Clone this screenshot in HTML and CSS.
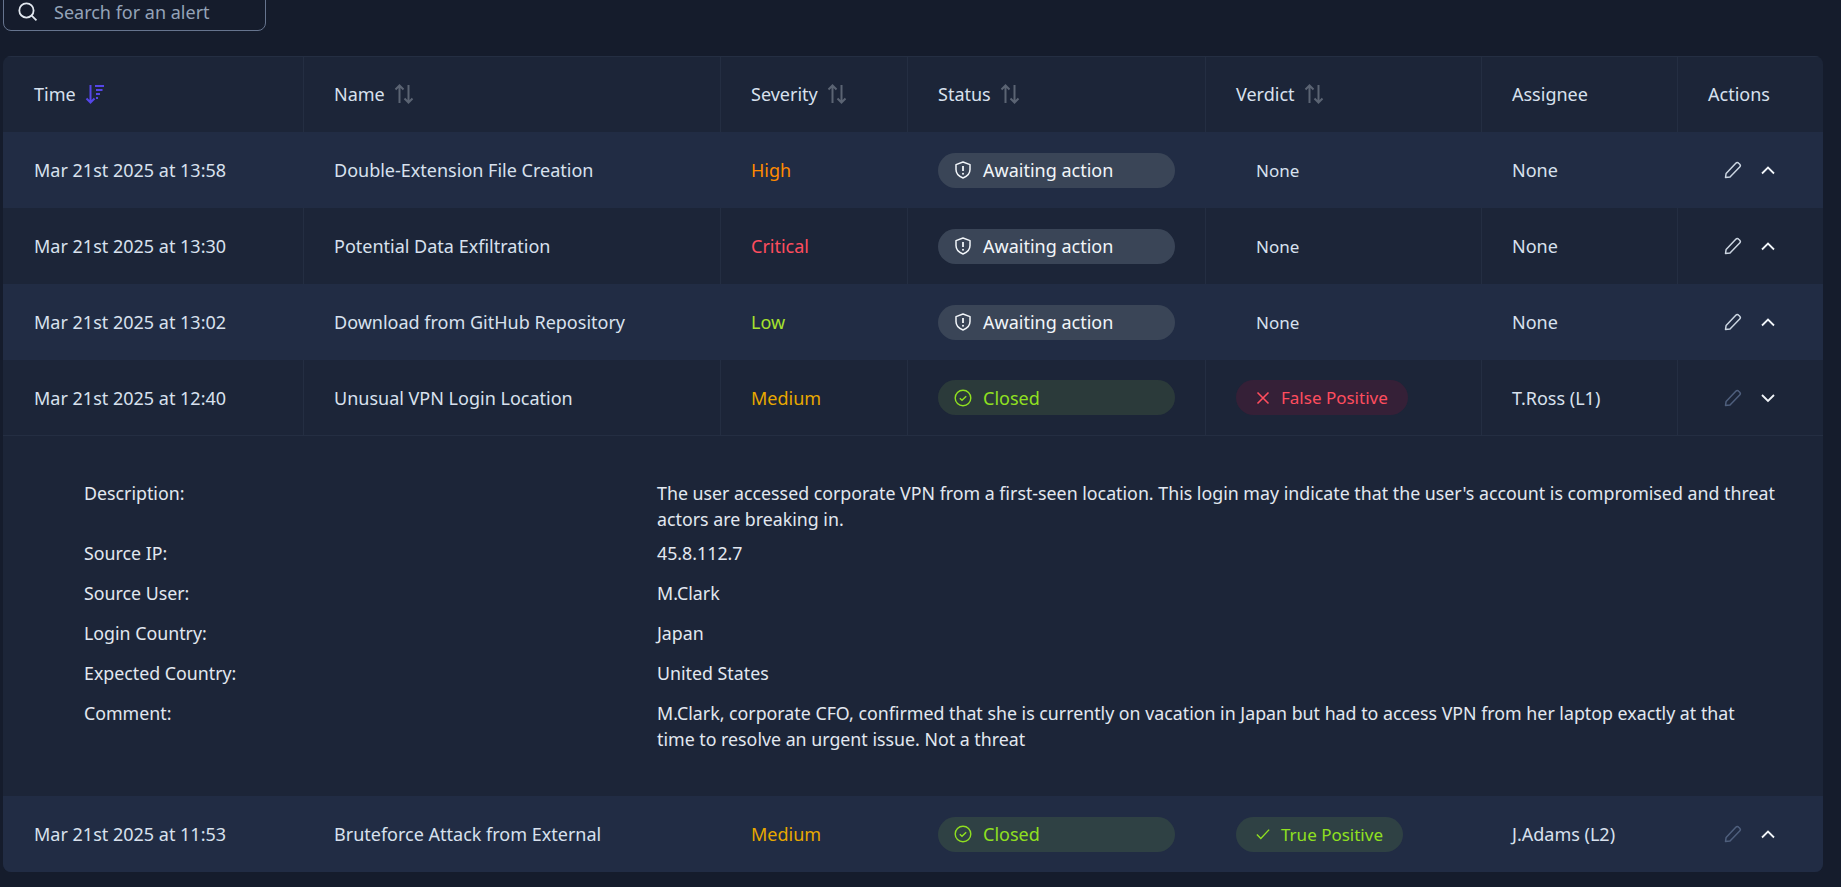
FILE: index.html
```html
<!DOCTYPE html>
<html lang="en">
<head>
  <meta charset="UTF-8" />
  <title>Alerts</title>
  <link rel="stylesheet" href="styles.css">
</head>
<body>
  <svg class="icon-defs" width="0" height="0">
    <defs>
      <symbol id="i-sort" viewBox="0 0 20 20"><path d="M5.5 19V1.5M1.5 5.5l4-4 4 4M14.5 1v17.5M10.5 14.5l4 4 4-4" fill="none" stroke="currentColor" stroke-width="2"/></symbol>
      <symbol id="i-pencil" viewBox="0 0 18 18"><path d="M1.5 16.5l.6-4L11.8 2.2a2 2 0 0 1 2.9 0l1 1a2 2 0 0 1 0 2.8L6 15.9z" fill="none" stroke="currentColor" stroke-width="1.5" stroke-linejoin="round"/></symbol>
      <symbol id="i-up" viewBox="0 0 16 16"><path d="M2 11.5l6-6 6 6" fill="none" stroke="currentColor" stroke-width="1.8"/></symbol>
      <symbol id="i-down" viewBox="0 0 16 16"><path d="M2 5l6 6 6-6" fill="none" stroke="currentColor" stroke-width="1.8"/></symbol>
      <symbol id="i-shield" viewBox="0 0 18 18"><path d="M9 1l7 2.6v5c0 4-2.8 6.900-7 8.400-4.200-1.500-7-4.400-7-8.400v-5z" fill="none" stroke="currentColor" stroke-width="1.500" stroke-linejoin="round"/><path d="M9 5v5" stroke="currentColor" stroke-width="1.800"/><circle cx="9" cy="12.700" r="1" fill="currentColor"/></symbol>
      <symbol id="i-closed" viewBox="0 0 18 18"><circle cx="9" cy="9" r="7.800" fill="none" stroke="currentColor" stroke-width="1.400"/><path d="M5.800 9.300l2.200 2 4.200-4" fill="none" stroke="currentColor" stroke-width="1.500"/></symbol>
    </defs>
  </svg>

  <div class="search">
    <svg class="search-icon" viewBox="0 0 20 20"><circle cx="9" cy="9" r="6.800" fill="none" stroke="currentColor" stroke-width="1.700"/><path d="M14 14l4.500 4.500" stroke="currentColor" stroke-width="1.700"/></svg>
    <span>Search for an alert</span>
  </div>

  <div class="panel">
    <table class="alerts">
      <colgroup>
        <col class="col-time"><col class="col-name"><col class="col-severity"><col class="col-status"><col class="col-verdict"><col class="col-assignee"><col class="col-actions">
      </colgroup>
      <thead>
        <tr>
          <th><span class="th-inner">Time <svg class="sort" viewBox="0 0 20 20"><path class="sort-active" d="M5.500 1v17.500M1.500 14.500l4 4 4-4" fill="none" stroke="currentColor" stroke-width="2"/><path class="sort-active" d="M10 2h9M11 6h6.500M11 10h4M11 14h2" fill="none" stroke="currentColor" stroke-width="2"/></svg></span></th>
          <th><span class="th-inner">Name <svg class="sort sort-idle"><use href="#i-sort"/></svg></span></th>
          <th><span class="th-inner">Severity <svg class="sort sort-idle"><use href="#i-sort"/></svg></span></th>
          <th><span class="th-inner">Status <svg class="sort sort-idle"><use href="#i-sort"/></svg></span></th>
          <th><span class="th-inner">Verdict <svg class="sort sort-idle"><use href="#i-sort"/></svg></span></th>
          <th>Assignee</th>
          <th>Actions</th>
        </tr>
      </thead>
      <tbody>
        <tr class="alt">
          <td>Mar 21st 2025 at 13:58</td>
          <td>Double-Extension File Creation</td>
          <td class="sev-high">High</td>
          <td><span class="pill pill-wait"><svg class="pill-icon"><use href="#i-shield"/></svg>Awaiting action</span></td>
          <td><span class="verdict">None</span></td>
          <td>None</td>
          <td><div class="actions"><svg class="edit"><use href="#i-pencil"/></svg><svg class="chev"><use href="#i-up"/></svg></div></td>
        </tr>
        <tr>
          <td>Mar 21st 2025 at 13:30</td>
          <td>Potential Data Exfiltration</td>
          <td class="sev-critical">Critical</td>
          <td><span class="pill pill-wait"><svg class="pill-icon"><use href="#i-shield"/></svg>Awaiting action</span></td>
          <td><span class="verdict">None</span></td>
          <td>None</td>
          <td><div class="actions"><svg class="edit"><use href="#i-pencil"/></svg><svg class="chev"><use href="#i-up"/></svg></div></td>
        </tr>
        <tr class="alt">
          <td>Mar 21st 2025 at 13:02</td>
          <td>Download from GitHub Repository</td>
          <td class="sev-low">Low</td>
          <td><span class="pill pill-wait"><svg class="pill-icon"><use href="#i-shield"/></svg>Awaiting action</span></td>
          <td><span class="verdict">None</span></td>
          <td>None</td>
          <td><div class="actions"><svg class="edit"><use href="#i-pencil"/></svg><svg class="chev"><use href="#i-up"/></svg></div></td>
        </tr>
        <tr class="open">
          <td>Mar 21st 2025 at 12:40</td>
          <td>Unusual VPN Login Location</td>
          <td class="sev-medium">Medium</td>
          <td><span class="pill pill-closed"><svg class="pill-icon"><use href="#i-closed"/></svg>Closed</span></td>
          <td><span class="verdict verdict-false"><svg class="verdict-icon" viewBox="0 0 14 14"><path d="M1.500 1.500l11 11M12.500 1.500l-11 11" stroke="currentColor" stroke-width="1.600"/></svg>False Positive</span></td>
          <td>T.Ross (L1)</td>
          <td><div class="actions"><svg class="edit edit-off"><use href="#i-pencil"/></svg><svg class="chev"><use href="#i-down"/></svg></div></td>
        </tr>
        <tr>
          <td class="details-cell" colspan="7">
            <dl class="details">
              <div class="detail detail-long"><dt>Description:</dt><dd>The user accessed corporate VPN from a first-seen location. This login may indicate that the user's account is compromised and threat actors are breaking in.</dd></div>
              <div class="detail"><dt>Source IP:</dt><dd>45.8.112.7</dd></div>
              <div class="detail"><dt>Source User:</dt><dd>M.Clark</dd></div>
              <div class="detail"><dt>Login Country:</dt><dd>Japan</dd></div>
              <div class="detail"><dt>Expected Country:</dt><dd>United States</dd></div>
              <div class="detail detail-last"><dt>Comment:</dt><dd>M.Clark, corporate CFO, confirmed that she is currently on vacation in Japan but had to access VPN from her laptop exactly at that<br>time to resolve an urgent issue. Not a threat</dd></div>
            </dl>
          </td>
        </tr>
        <tr class="alt">
          <td>Mar 21st 2025 at 11:53</td>
          <td>Bruteforce Attack from External</td>
          <td class="sev-medium">Medium</td>
          <td><span class="pill pill-closed"><svg class="pill-icon"><use href="#i-closed"/></svg>Closed</span></td>
          <td><span class="verdict verdict-true"><svg class="verdict-icon" viewBox="0 0 16 14"><path d="M1 7.500l4.500 4.500L15 2" fill="none" stroke="currentColor" stroke-width="1.600"/></svg>True Positive</span></td>
          <td>J.Adams (L2)</td>
          <td><div class="actions"><svg class="edit edit-off"><use href="#i-pencil"/></svg><svg class="chev"><use href="#i-up"/></svg></div></td>
        </tr>
      </tbody>
    </table>
  </div>
</body>
</html>
```

FILE: styles.css
```css
html, body {
  height: 100%;
  overflow: hidden;
}

body {
  margin: 0;
  padding: 0 18px 0 3px;
  background-color: #151c2c;
  font-family: "Noto Sans", sans-serif;
  font-size: 18px;
  color: #d8e1ee;
}

.icon-defs {
  display: block;
}

.search {
  display: flex;
  align-items: center;
  gap: 16px;
  box-sizing: border-box;
  width: 263px;
  height: 39px;
  margin-top: -8px;
  padding: 0 13px;
  border: 1px solid #66748e;
  border-radius: 8px;
  color: #94a3b8;
}

.search-icon {
  width: 21px;
  height: 21px;
  color: #e2e8f0;
}

.panel {
  margin-top: 25px;
  border-radius: 8px;
  overflow: hidden;
  background: #1c2538;
}

.alerts {
  width: 100%;
  table-layout: fixed;
  border-collapse: separate;
  border-spacing: 0;
}

.col-time { width: 301px; }
.col-name { width: 417px; }
.col-severity { width: 187px; }
.col-status { width: 298px; }
.col-verdict { width: 276px; }
.col-assignee { width: 196px; }

th, td {
  height: 76px;
  padding: 0 0 0 30px;
  box-sizing: border-box;
  border-right: 1px solid #242e42;
  font-weight: 400;
  text-align: left;
}

th:first-child, td:first-child {
  padding-left: 31px;
}

th:last-child, td:last-child {
  border-right: none;
}

th {
  padding-bottom: 2px;
  border-top: 1px solid #242e42;
}

.th-inner {
  display: flex;
  align-items: center;
  gap: 9px;
}

.sort {
  width: 20px;
  height: 20px;
}

.sort-idle {
  color: #5b6473;
}

.sort-active {
  color: #5546e8;
}

.alt td {
  background: #212c44;
  border-right-color: transparent;
}

.open td {
  border-bottom: 1px solid #242e42;
}

.sev-high { color: #ff8a00; }
.sev-critical { color: #ff4d5e; }
.sev-low { color: #a6e22e; }
.sev-medium { color: #e8a800; }

.pill {
  display: flex;
  align-items: center;
  gap: 11px;
  box-sizing: border-box;
  width: 237px;
  height: 35px;
  padding-left: 16px;
  border-radius: 18px;
}

.pill-icon {
  width: 18px;
  height: 18px;
}

.pill-wait {
  background: #3a4557;
  color: #f1f5f9;
}

.pill-closed {
  background: #2b3a3a;
  color: #90e020;
}

.alt .pill-closed {
  background: #2f4144;
}

.verdict {
  display: inline-flex;
  align-items: center;
  gap: 11px;
  height: 35px;
  padding: 0 20px;
  border-radius: 18px;
  font-size: 17px;
}

.verdict-icon {
  width: 14px;
  height: 14px;
}

.verdict-false {
  background: #352037;
  color: #ff4d5e;
}

.verdict-true {
  background: #2f4144;
  color: #90e020;
}

.actions {
  display: flex;
  align-items: center;
  gap: 18px;
  padding-left: 16px;
}

.edit {
  width: 18px;
  height: 18px;
  color: #cbd5e1;
}

.edit-off {
  color: #4f5f7d;
}

.chev {
  width: 16px;
  height: 16px;
  color: #f1f5f9;
}

.alerts .details-cell {
  height: auto;
  padding: 0;
  border-right: none;
}

.details {
  margin: 0;
  padding: 44px 40px 44px 81px;
  font-size: 17.8px;
  line-height: 26px;
  color: #e2e8f0;
}

.detail {
  display: grid;
  grid-template-columns: 573px 1fr;
  margin-bottom: 14px;
}

.detail-long {
  margin-bottom: 8px;
}

.detail-last {
  margin-bottom: 0;
}

.detail dd {
  margin: 0;
}
```
